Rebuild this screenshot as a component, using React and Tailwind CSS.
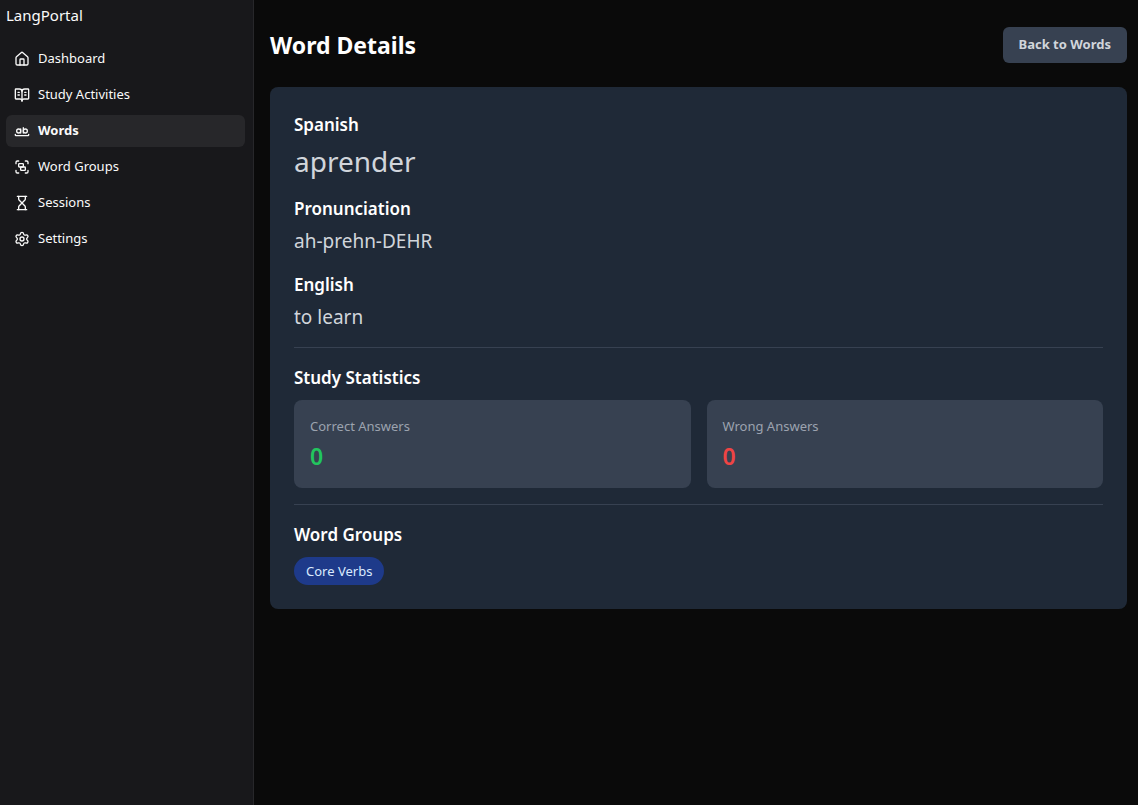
import { House, BookOpenText, WholeWord, Group, Hourglass, Settings } from "lucide-react";

const items = [
  { label: "Dashboard", Icon: House },
  { label: "Study Activities", Icon: BookOpenText },
  { label: "Words", Icon: WholeWord, active: true },
  { label: "Word Groups", Icon: Group },
  { label: "Sessions", Icon: Hourglass },
  { label: "Settings", Icon: Settings },
];

function Sidebar() {
  return (
    <aside className="w-[254px] shrink-0 border-r border-[#27272a] bg-[#18181b] pr-2 pl-1.5">
      <div className="pt-[3px] pb-4 text-[15px] leading-6">LangPortal</div>
      <nav>
        <ul className="flex flex-col gap-1">
          {items.map(({ label, Icon, active }) => (
            <li key={label}>
              <a
                href="#"
                aria-current={active ? "page" : undefined}
                className={
                  active
                    ? "flex h-8 items-center gap-2 rounded-md bg-[#27272a] px-2 text-[13px] font-bold"
                    : "flex h-8 items-center gap-2 rounded-md px-2 text-[13px]"
                }
              >
                <Icon size={16} aria-hidden="true" />
                {label}
              </a>
            </li>
          ))}
        </ul>
      </nav>
    </aside>
  );
}

function Heading({ children }) {
  return <h2 className="text-[17px] leading-7 font-semibold text-white">{children}</h2>;
}

function Stat({ label, value, tone }) {
  return (
    <div className="rounded-lg bg-[#374151] p-4">
      <dt className="text-[13px] leading-5 text-[#9ca3af]">{label}</dt>
      <dd className={`mt-1 text-[23px] leading-8 font-semibold ${tone}`}>{value}</dd>
    </div>
  );
}

export default function App() {
  return (
    <div className="flex min-h-screen bg-[#0a0a0a] font-['Noto_Sans',sans-serif] text-[#fafafa]">
      <Sidebar />
      <main className="min-w-0 flex-1 pt-[27px] pr-[11px] pb-4 pl-4">
        <header className="flex items-center justify-between">
          <h1 className="text-[23px] leading-8 font-bold text-white">Word Details</h1>
          <button
            type="button"
            className="h-9 rounded-md bg-[#374151] px-4 text-[13px] font-bold text-[#d1d5db]"
          >
            Back to Words
          </button>
        </header>

        <div className="mt-6 flex flex-col gap-4 rounded-lg bg-[#1f2937] p-6 text-[#d1d5db]">
          <section className="flex flex-col gap-1">
            <Heading>Spanish</Heading>
            <p className="text-[28px] leading-9">aprender</p>
          </section>
          <section className="flex flex-col gap-1">
            <Heading>Pronunciation</Heading>
            <p className="text-[19px] leading-7">ah-prehn-DEHR</p>
          </section>
          <section className="flex flex-col gap-1">
            <Heading>English</Heading>
            <p className="text-[19px] leading-7">to learn</p>
          </section>
          <section className="flex flex-col gap-2 border-t border-[#374151] pt-4">
            <Heading>Study Statistics</Heading>
            <dl className="grid grid-cols-2 gap-4">
              <Stat label="Correct Answers" value="0" tone="text-[#22c55e]" />
              <Stat label="Wrong Answers" value="0" tone="text-[#ef4444]" />
            </dl>
          </section>
          <section className="flex flex-col items-start gap-2 self-stretch border-t border-[#374151] pt-4">
            <Heading>Word Groups</Heading>
            <span className="rounded-full bg-[#1e3a8a] px-3 py-1 text-[13px] leading-5 text-[#dbeafe]">
              Core Verbs
            </span>
          </section>
        </div>
      </main>
    </div>
  );
}
